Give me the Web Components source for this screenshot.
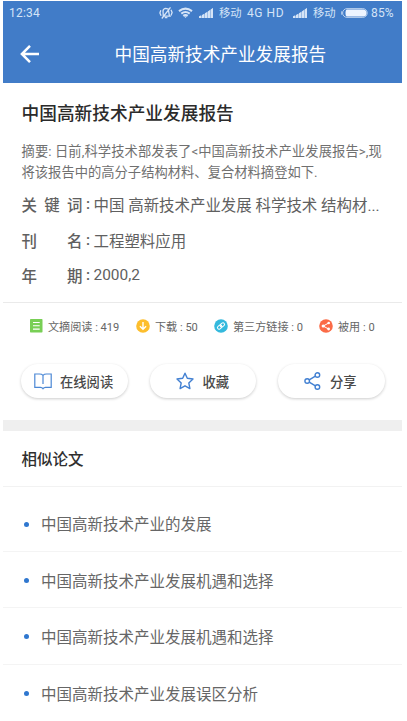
<!DOCTYPE html>
<html lang="zh-CN">
<head>
<meta charset="utf-8">
<title>中国高新技术产业发展报告</title>
<style>
body{margin:0;background:#fff;width:407px;height:721px;overflow:hidden;font-family:Roboto,"Noto Sans CJK SC",sans-serif}
</style>
</head>
<body>
<report-page></report-page>
<script>
const define = (name, html) => customElements.define(name, class extends HTMLElement {
  constructor() {
    super();
    const t = document.createElement('template');
    t.innerHTML = html;
    this.attachShadow({mode: 'open'}).append(t.content.cloneNode(true));
  }
});

const icons = {
  mute: '<svg width="14" height="14" viewBox="0 0 14 14" fill="none" stroke="#d5e4f7" stroke-width="1.3"><path d="M4.3 10.2 4 4.8Q4.4 2.5 6.8 2.3L9.3 3.1 10.2 8.8 11 10.2Z M5.8 11.6h2.6 M1.8 4.2.9 7l1.2 2.8 M12 3.8 13.1 6.5 12 9.4 M11.5 1.3 2.8 12.5"/></svg>',
  wifi: '<svg width="15" height="12" viewBox="0 0 15 12" fill="none" stroke="#d5e4f7" stroke-width="2.1"><path d="M1 4.1Q7.5-.9 14 4.1M3.3 6.6Q7.5 3.4 11.7 6.6M5.3 8.9Q7.5 7.3 9.7 8.9"/><path d="m6.2 9.6 1.3 1.5 1.3-1.5Z" fill="#d5e4f7" stroke="none"/></svg>',
  signal: '<svg width="14" height="10" viewBox="0 0 14 10" fill="#d5e4f7"><path d="M0 10 14 0V10Z" opacity=".45"/><path d="M0 10V8.3L2.3 7.2V10ZM3 10V6.9L5.2 5.7V10ZM5.9 10V5.2L8.1 3.9V10ZM8.8 10V3.4L11 2V10ZM11.7 10V1.6L14 0V10Z"/></svg>',
  battery: '<svg width="27" height="10" viewBox="0 0 27 10"><rect x="1.6" y=".6" width="24.6" height="8.8" rx="4.4" fill="none" stroke="#b9d0ee"/><path d="M6 1.5h16q3.5 0 3.5 3.5T22 8.500H6Q4.500 8.500 4.500 5T6 1.500Z" fill="#edf4ff"/><path d="M.7 3.300v3.400" stroke="#b9d0ee"/></svg>',
  back: '<svg width="20" height="18" viewBox="0 0 20 18" fill="none" stroke="#fff" stroke-width="2.500"><path d="M19 9H2M10 .9 1.900 9l8.100 8.100"/></svg>',
  doc: '<svg width="13" height="14" viewBox="0 0 13 14"><rect width="12.500" height="13.500" rx=".7" fill="#78cf55"/><path d="M3 3.500h6.700M3 6.800h6.700M3 10.100h6.700" stroke="#fff" stroke-width="1.100"/></svg>',
  down: '<svg width="14" height="14" viewBox="0 0 14 14"><circle cx="7" cy="7" r="6.800" fill="#fdbe2d"/><path d="M7 3v7M3.900 7.200 7 10.300l3.100-3.100" fill="none" stroke="#fff" stroke-width="1.400"/></svg>',
  link: '<svg width="14" height="14" viewBox="0 0 14 14"><circle cx="7" cy="7" r="6.800" fill="#34b9dd"/><g fill="none" stroke="#fff" stroke-width="1" transform="rotate(-38 7 7)"><rect x="2.900" y="5.400" width="4.800" height="3.200" rx="1.600"/><rect x="6.300" y="5.400" width="4.800" height="3.200" rx="1.600"/></g></svg>',
  used: '<svg width="14" height="14" viewBox="0 0 14 14"><circle cx="7" cy="7" r="6.800" fill="#fb6b46"/><path d="m9.700 4-5.500 3 5.300 3" fill="none" stroke="#fff"/><g fill="#fff"><circle cx="9.700" cy="4" r="1.300"/><circle cx="4.200" cy="7" r="1.600"/><circle cx="9.600" cy="10" r="1.400"/></g></svg>',
  book: '<svg width="18" height="17" viewBox="0 0 18 17" fill="none" stroke="#4c88d5" stroke-width="1.200"><path d="M9 2.300Q7.800 1 5.500 1H.8v13.400h5.700q1.600 0 2.500 1.300.9-1.300 2.500-1.300h5.700V1h-4.700Q10.200 1 9 2.300V11"/></svg>',
  star: '<svg width="18" height="18" viewBox="0 0 18 18" fill="none" stroke="#4280d2" stroke-width="1.400" stroke-linejoin="round"><path d="m9 1.200 2.300 5.100 5.700.7-4.200 3.900 1.100 5.700L9 13.800l-4.900 2.800 1.100-5.700L1 7l5.700-.7Z"/></svg>',
  share: '<svg width="18" height="18" viewBox="0 0 18 18" fill="none" stroke="#4280d2" stroke-width="1.400"><circle cx="3.200" cy="9" r="2.300"/><circle cx="13.400" cy="3" r="2.300"/><circle cx="13.400" cy="15" r="2.300"/><path d="m5.200 7.900 6.200-3.700M5.200 10.100l6.200 3.700"/></svg>'
};
customElements.define('ui-icon', class extends HTMLElement {
  constructor() { super(); this.attachShadow({mode: 'open'}); }
  connectedCallback() {
    this.shadowRoot.innerHTML = '<style>:host{display:block;flex:none}svg{display:block}</style>' + icons[this.getAttribute('name')];
  }
});

define('status-bar', `<style>
:host{display:flex;align-items:center;height:24px;box-sizing:border-box;padding:0 6px 0 6px;font-size:12px;color:#d5e4f7;white-space:nowrap;line-height:16px}
.time{width:150px;letter-spacing:.2px}.m{font-size:11.300px;padding-top:1px}.m1{margin-left:6px;width:28px}.hd{width:46px;letter-spacing:.55px}.m2{margin-left:6px;width:28px}.pct{margin-left:3px;font-size:12px;letter-spacing:.15px}
.w{margin-left:5px}.s{margin-left:6px}
</style><span class="time">12:34</span><ui-icon name="mute"></ui-icon><ui-icon class="w" name="wifi"></ui-icon><ui-icon class="s" name="signal"></ui-icon><span class="m m1">移动</span><span class="hd">4G HD</span><ui-icon name="signal"></ui-icon><span class="m m2">移动</span><ui-icon name="battery"></ui-icon><span class="pct">85%</span>`);

define('app-bar', `<style>
:host{display:flex;align-items:center;height:58px;padding-left:17px;color:#fff;font-size:17.650px;line-height:26px}
.t{margin-left:74.500px;padding-top:2px;white-space:nowrap}
</style><ui-icon name="back"></ui-icon><span class="t"><slot></slot></span>`);

define('meta-row', `<style>
:host{display:flex;height:35.500px;align-items:center;font-size:15.450px;color:#606060;white-space:nowrap}
.l{width:61px;display:flex;justify-content:space-between;font-weight:500}.c{width:11px;text-align:center;font-weight:500}
</style><span class="l"><slot name="label"></slot></span><span class="c">:</span><span><slot></slot></span>`);

define('stat-item', `<style>
:host{display:flex;align-items:center;font-size:11.100px;color:#666;white-space:nowrap}
span{margin-left:5px}
</style><slot name="icon"></slot><span><slot></slot></span>`);

define('pill-button', `<style>
:host{display:flex;align-items:center;box-sizing:border-box;height:34px;width:106.500px;border-radius:17px;background:#fff;box-shadow:0 1px 3px rgba(0,0,0,.2);padding-left:var(--pad);gap:var(--gap);font-size:13.300px;font-weight:500;color:#4a4a4a;white-space:nowrap}
</style><slot name="icon"></slot><span><slot></slot></span>`);

define('paper-item', `<style>
:host{display:flex;align-items:center;box-sizing:border-box;height:56.300px;border-bottom:1px solid #f4f4f4;padding-left:21px;font-size:15.500px;color:#666;white-space:nowrap}
i{width:5px;height:5px;border-radius:50%;background:#2f77cf;margin:2px 12px 0 0}
</style><i></i><span><slot></slot></span>`);

define('report-page', `<style>
:host{display:block;width:399px;margin-left:3px;padding-top:1px}
header{background:#417cc8;height:82px}
article{box-sizing:border-box;padding:16px 0 0 18.500px;height:219px}
h1{margin:0;font-size:17.700px;line-height:28px;font-weight:500;color:#2b2b2b;padding-top:1px}
.abs{margin:14px 0 0;font-size:13.300px;line-height:20.500px;color:#707070;white-space:nowrap}
.abs div:first-child{letter-spacing:.08px}
.meta{padding-top:3.500px}
.stats{display:flex;align-items:center;height:46px;border-top:1px solid #eaeaea;padding-left:27px}
.stats stat-item:nth-child(1){width:106px}.stats stat-item:nth-child(2){width:78px}.stats stat-item:nth-child(3){width:105px}
.btns{display:flex;gap:22px;padding:15px 0 0 18px;height:56px}
.band{height:11px;background:#efefef}
h2{margin:0;height:56px;box-sizing:border-box;border-bottom:1px solid #f2f2f2;padding-left:18.500px;font-size:15.500px;line-height:58px;font-weight:500;color:#2f2f2f}
.list{padding-top:8.700px}
</style>
<header><status-bar></status-bar><app-bar>中国高新技术产业发展报告</app-bar></header>
<article>
<h1>中国高新技术产业发展报告</h1>
<div class="abs"><div>摘要: 日前,科学技术部发表了&lt;中国高新技术产业发展报告&gt;,现</div><div>将该报告中的高分子结构材料、复合材料摘登如下.</div></div>
<div class="meta">
<meta-row><span slot="label">关</span><span slot="label">键</span><span slot="label">词</span>中国 高新技术产业发展 科学技术 结构材...</meta-row>
<meta-row><span slot="label">刊</span><span slot="label">名</span>工程塑料应用</meta-row>
<meta-row><span slot="label">年</span><span slot="label">期</span>2000,2</meta-row>
</div>
</article>
<div class="stats">
<stat-item><ui-icon slot="icon" name="doc"></ui-icon>文摘阅读 : 419</stat-item>
<stat-item><ui-icon slot="icon" name="down"></ui-icon>下载 : 50</stat-item>
<stat-item><ui-icon slot="icon" name="link"></ui-icon>第三方链接 : 0</stat-item>
<stat-item><ui-icon slot="icon" name="used"></ui-icon>被用 : 0</stat-item>
</div>
<div class="btns">
<pill-button style="--pad:13px;--gap:8px"><ui-icon slot="icon" name="book"></ui-icon>在线阅读</pill-button>
<pill-button style="--pad:26px;--gap:9px"><ui-icon slot="icon" name="star"></ui-icon>收藏</pill-button>
<pill-button style="--pad:26px;--gap:8px"><ui-icon slot="icon" name="share"></ui-icon>分享</pill-button>
</div>
<div class="band"></div>
<h2>相似论文</h2>
<div class="list">
<paper-item>中国高新技术产业的发展</paper-item>
<paper-item>中国高新技术产业发展机遇和选择</paper-item>
<paper-item>中国高新技术产业发展机遇和选择</paper-item>
<paper-item style="border-bottom:none">中国高新技术产业发展误区分析</paper-item>
</div>`);
</script>
</body>
</html>
